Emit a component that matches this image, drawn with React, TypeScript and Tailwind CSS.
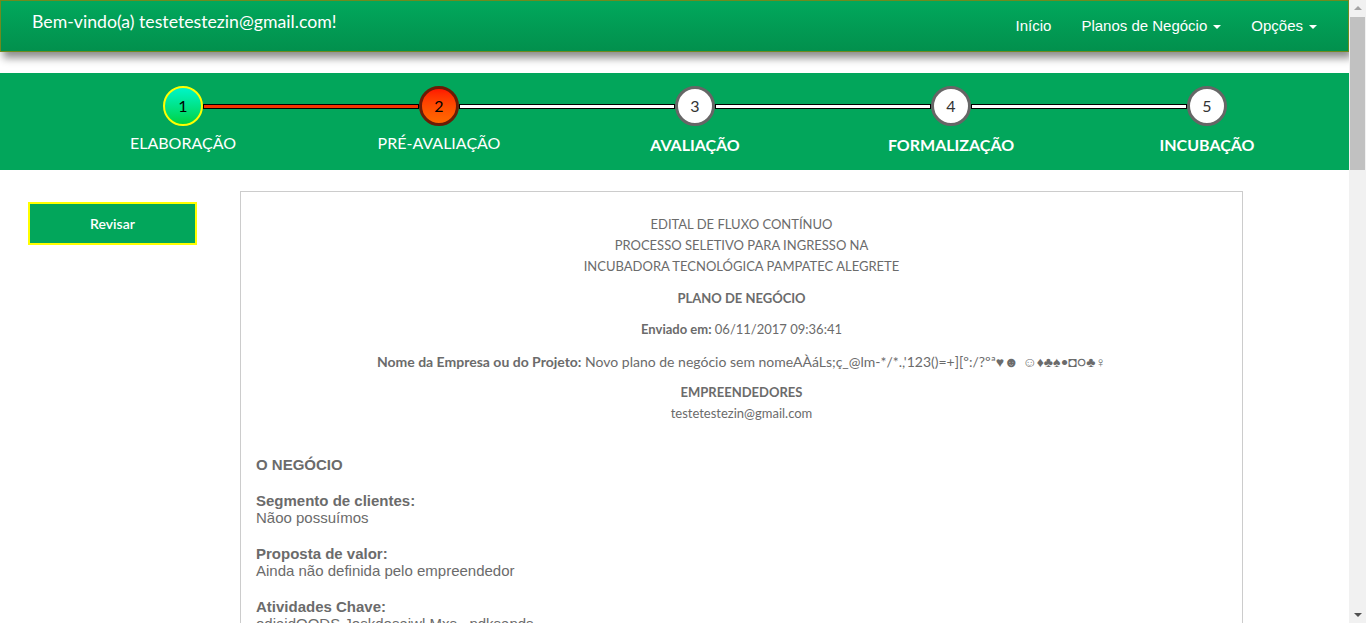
import { ReactNode } from 'react'

const steps = [
  { n: 1, label: 'ELABORAÇÃO', state: 'done' },
  { n: 2, label: 'PRÉ-AVALIAÇÃO', state: 'current' },
  { n: 3, label: 'AVALIAÇÃO', state: 'todo' },
  { n: 4, label: 'FORMALIZAÇÃO', state: 'todo' },
  { n: 5, label: 'INCUBAÇÃO', state: 'todo' },
]

const Caret = () => (
  <span className="ml-[6px] inline-block h-0 w-0 border-x-[4px] border-t-[4px] border-x-transparent border-t-white align-middle" />
)

const Navbar = () => (
  <div className="relative z-10 flex h-[52px] items-center justify-between border border-[#6f8a1f] bg-gradient-to-b from-[#01a85c] to-[#02904d] pl-[31px] pr-[31px] shadow-[3px_6px_8px_rgba(0,0,0,0.45)]">
    <span className="mb-[7px] font-['Lato',sans-serif] text-[17.7px] text-white">
      Bem-vindo(a) testetestezin@gmail.com!
    </span>
    <div className="flex items-center gap-[30px] font-['Liberation_Sans',Arial,sans-serif] text-[15px] text-white">
      <span>Início</span>
      <span>
        Planos de Negócio
        <Caret />
      </span>
      <span>
        Opções
        <Caret />
      </span>
    </div>
  </div>
)

const Circle = ({ n, state }: { n: number; state: string }) => {
  if (state === 'done') {
    return (
      <div className="flex h-[40px] w-[40px] shrink-0 items-center justify-center rounded-full border-2 border-[#ffff00] bg-gradient-to-b from-[#00f5c8] to-[#00d23c] text-[16px] text-black">
        {n}
      </div>
    )
  }
  if (state === 'current') {
    return (
      <div className="flex h-[40px] w-[40px] shrink-0 items-center justify-center rounded-full border-[3px] border-[#6a1c06] bg-gradient-to-b from-[#ff1500] to-[#ff6a00] text-[16px] text-black">
        {n}
      </div>
    )
  }
  return (
    <div className="flex h-[40px] w-[40px] shrink-0 items-center justify-center rounded-full border-[3px] border-[#666666] bg-white text-[16px] text-[#333]">
      {n}
    </div>
  )
}

const Line = ({ red }: { red?: boolean }) => (
  <div
    className={
      red
        ? 'h-[5px] w-[216px] shrink-0 border border-black bg-gradient-to-b from-[#ff2a00] to-[#e83a00]'
        : 'h-[5px] w-[216px] shrink-0 border border-black bg-white'
    }
  />
)

const Stepper = () => (
  <div className="mt-[21px] h-[97px] bg-[#02a65b] font-['Lato',sans-serif]">
    <div className="flex items-center pl-[163px] pt-[13px]">
      {steps.map((s, i) => (
        <div key={s.n} className="flex items-center">
          {i > 0 && <Line red={i === 1} />}
          <Circle n={s.n} state={s.state} />
        </div>
      ))}
    </div>
    <div className="mt-[5px] grid grid-cols-[repeat(5,256px)] pl-[55px]">
      {steps.map((s, i) => (
        <div
          key={s.n}
          className={
            i < 2
              ? 'text-center text-[16px] text-white'
              : 'mt-[2px] text-center text-[16px] font-bold text-white'
          }
        >
          {s.label}
        </div>
      ))}
    </div>
  </div>
)

const Field = ({ label, children }: { label: string; children: ReactNode }) => (
  <div className="mt-[19px] leading-[17px]">
    <div className="font-bold">{label}</div>
    <div>{children}</div>
  </div>
)

const Plano = () => (
  <div className="w-[1003px] border border-[#cccccc] px-[15px] pb-[40px] pt-[22px] text-[#6b6b6b]">
    <div className="text-center font-['Lato',sans-serif] text-[13px] leading-[21px]">
      <p>
        EDITAL DE FLUXO CONTÍNUO
        <br />
        PROCESSO SELETIVO PARA INGRESSO NA
        <br />
        INCUBADORA TECNOLÓGICA PAMPATEC ALEGRETE
      </p>
      <p className="mt-[11px] font-bold">PLANO DE NEGÓCIO</p>
      <p className="mt-[10px]">
        <b>Enviado em:</b> 06/11/2017 09:36:41
      </p>
      <p className="mt-[11px] text-[14px]">
        <b>Nome da Empresa ou do Projeto:</b> Novo plano de negócio sem nomeAÀáLs;ç_@lm-*/*.,&apos;123()=+][º{}:/?ºª♥☻ ☺♦♣♠•◘○♣♀
      </p>
      <p className="mt-[10px] font-bold">EMPREENDEDORES</p>
      <p>testetestezin@gmail.com</p>
    </div>
    <div className="font-['Liberation_Sans',Arial,sans-serif] text-[15px]">
      <div className="mt-[32px] font-bold leading-[17px]">O NEGÓCIO</div>
      <Field label="Segmento de clientes:">Nãoo possuímos</Field>
      <Field label="Proposta de valor:">Ainda não definida pelo empreendedor</Field>
      <Field label="Atividades Chave:">odjaidOODS,Joskdosajwl Mxs ..pdksapds</Field>
    </div>
  </div>
)

const Scrollbar = () => (
  <div className="flex w-[17px] shrink-0 flex-col items-center bg-[#f1f1f1]">
    <div className="mt-[6px] h-0 w-0 border-x-[4px] border-b-[4px] border-x-transparent border-b-[#a3a3a3]" />
    <div className="mt-[7px] h-[153px] w-[15px] bg-[#c1c1c1]" />
    <div className="flex-1" />
    <div className="mb-[6px] h-0 w-0 border-x-[4px] border-t-[4px] border-x-transparent border-t-[#505050]" />
  </div>
)

export default function App() {
  return (
    <div className="flex h-screen overflow-hidden bg-white">
      <div className="min-w-0 flex-1 overflow-hidden">
        <Navbar />
        <Stepper />
        <div className="flex pt-[21px]">
          <div className="w-[240px] shrink-0 pl-[28px] pt-[11px]">
            <button className="h-[43px] w-[169px] border-2 border-[#ffff00] bg-[#02a65b] font-['Lato',sans-serif] text-[14px] font-semibold text-white">
              Revisar
            </button>
          </div>
          <Plano />
        </div>
      </div>
      <Scrollbar />
    </div>
  )
}
